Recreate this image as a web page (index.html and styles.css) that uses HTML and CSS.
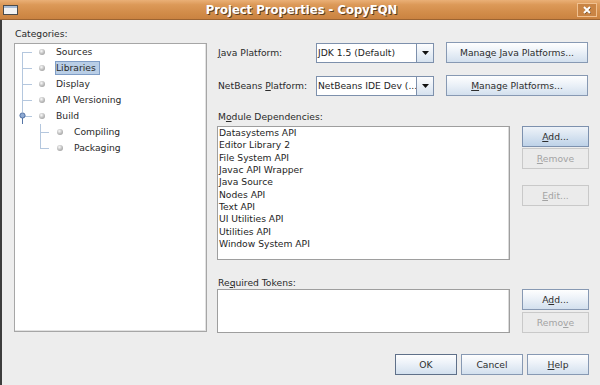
FILE: index.html
```html
<!DOCTYPE html>
<html>
<head>
<meta charset="utf-8">
<link rel="stylesheet" href="styles.css">
</head>
<body>
<div class="window">
  <div class="titlebar">
    <span class="win-icon">
      <svg width="15" height="10" viewBox="0 0 15 10"><rect x="0.5" y="0.5" width="14" height="9" fill="#f2f2f2" stroke="#4b4b4b"/><rect x="1" y="1" width="13" height="2" fill="#a9bdd6"/></svg>
    </span>
    <span class="title">Project Properties - CopyFQN</span>
    <span class="close">
      <svg width="20" height="14" viewBox="0 0 20 14"><rect x="0.5" y="0.5" width="19" height="13" fill="#c98444" stroke="#f0c08f"/><path d="M7.5 4.5 L13.5 10.5 M13.5 4.5 L7.5 10.5" stroke="#6b4520" stroke-width="2"/><path d="M7 4 L13 10 M13 4 L7 10" stroke="#fff" stroke-width="2"/></svg>
    </span>
  </div>
  <div class="content">
    <div class="main">
      <div class="left">
        <div class="cap">Categories:</div>
        <div class="tree">
          <div class="node top first"><span class="bullet"></span><span class="label">Sources</span></div>
          <div class="node top"><span class="bullet"></span><span class="label selected">Libraries</span></div>
          <div class="node top"><span class="bullet"></span><span class="label">Display</span></div>
          <div class="node top"><span class="bullet"></span><span class="label">API Versioning</span></div>
          <div class="node top build">
            <svg class="knob" width="7" height="12" viewBox="0 0 7 12"><line x1="3.5" y1="5" x2="3.5" y2="12" stroke="#5676a6" stroke-width="1"/><circle cx="3.5" cy="3.5" r="2.6" fill="#8eaad3" stroke="#4f70a3" stroke-width="1"/></svg>
            <span class="bullet"></span><span class="label">Build</span>
          </div>
          <div class="node sub"><span class="bullet"></span><span class="label">Compiling</span></div>
          <div class="node sub last"><span class="bullet"></span><span class="label">Packaging</span></div>
        </div>
      </div>
      <div class="right">
        <div class="form-row">
          <span class="field-label"><u>J</u>ava Platform:</span>
          <div class="combo"><span class="combo-text">JDK 1.5 (Default)</span><span class="combo-arrow"><svg width="7" height="4" viewBox="0 0 7 4"><path d="M0 0 H7 L3.5 4 Z" fill="#111"/></svg></span></div>
          <button class="btn wide">Mana<u>g</u>e Java Platforms...</button>
        </div>
        <div class="form-row second">
          <span class="field-label">NetBeans <u>P</u>latform:</span>
          <div class="combo"><span class="combo-text">NetBeans IDE Dev (...</span><span class="combo-arrow"><svg width="7" height="4" viewBox="0 0 7 4"><path d="M0 0 H7 L3.5 4 Z" fill="#111"/></svg></span></div>
          <button class="btn wide"><u>M</u>anage Platforms...</button>
        </div>
        <div class="cap dep-cap">M<u>o</u>dule Dependencies:</div>
        <div class="dep">
          <div class="list">
            <div class="item">Datasystems API</div>
            <div class="item">Editor Library 2</div>
            <div class="item">File System API</div>
            <div class="item">Javac API Wrapper</div>
            <div class="item">Java Source</div>
            <div class="item">Nodes API</div>
            <div class="item">Text API</div>
            <div class="item">UI Utilities API</div>
            <div class="item">Utilities API</div>
            <div class="item">Window System API</div>
          </div>
          <div class="side">
            <button class="btn hot"><u>A</u>dd...</button>
            <button class="btn" disabled><u>R</u>emove</button>
            <button class="btn spaced" disabled><u>E</u>dit...</button>
          </div>
        </div>
        <div class="cap tok-cap">Re<u>q</u>uired Tokens:</div>
        <div class="dep tokens">
          <div class="list"></div>
          <div class="side tight">
            <button class="btn">A<u>d</u>d...</button>
            <button class="btn" disabled>Remo<u>v</u>e</button>
          </div>
        </div>
      </div>
    </div>
    <div class="footer">
      <button class="btn default">OK</button>
      <button class="btn">Cancel</button>
      <button class="btn"><u>H</u>elp</button>
    </div>
  </div>
</div>
</body>
</html>
```
FILE: styles.css
```css
* { box-sizing: border-box; }
html, body { margin: 0; padding: 0; }
body {
  font-family: "DejaVu Sans", sans-serif;
  font-size: 9.2px;
  color: #2a2a2a;
  background: #ededed;
}
u { text-decoration: underline; text-underline-offset: 1px; }

.window {
  width: 600px;
  height: 385px;
  display: flex;
  flex-direction: column;
  background: #ededed;
  overflow: hidden;
}

.titlebar {
  height: 20px;
  flex: none;
  display: grid;
  grid-template-columns: 1fr auto 1fr;
  align-items: center;
  padding: 0 3px 0 3px;
  background: linear-gradient(to bottom, #eab077 0%, #dc9958 25%, #d18b48 70%, #ca8341 100%);
  border-bottom: 1px solid #9c6432;
}
.win-icon { display: flex; align-items: center; height: 10px; margin-top: 1px; }
.win-icon svg { display: block; }
.title {
  font-weight: bold;
  font-size: 11.6px;
  color: #fff;
  text-shadow: 1px 1px 0 #5c3d1f;
  padding-left: 3px;
}
.close { justify-self: end; display: flex; }
.close svg { display: block; }

.content {
  flex: 1;
  display: flex;
  flex-direction: column;
  border-left: 2px solid #3d3d3d;
  padding: 7px 11px 0 12px;
}

.main { display: flex; gap: 10px; }

.left { width: 193px; display: flex; flex-direction: column; }
.cap { line-height: 14px; height: 14px; }
.left .cap { padding-left: 1px; }

.tree {
  margin-top: 2px;
  height: 289px;
  background: #fff;
  border: 1px solid #a6a6a6;
  box-shadow: inset -1px -1px 0 #e2e2e2;
  padding-top: 0;
}
.node {
  position: relative;
  height: 16px;
  display: flex;
  align-items: center;
  padding-left: 24px;
}
.node.sub { padding-left: 42px; }
.node::before {
  content: "";
  position: absolute;
  left: 7px;
  top: 8px;
  width: 10px;
  border-top: 1px solid #b4c7de;
}
.node::after {
  content: "";
  position: absolute;
  left: 7px;
  top: 0;
  height: 16px;
  border-left: 1px solid #b4c7de;
}
.node.first::after { top: 8px; height: 8px; }
.node.build::after { height: 4px; }
.node.sub::before { left: 25px; width: 9px; }
.node.sub::after { left: 25px; }
.node.last::after { height: 9px; }
.knob { position: absolute; left: 4px; top: 4px; display: block; }

.bullet {
  width: 6px;
  height: 6px;
  border-radius: 50%;
  background: radial-gradient(circle at 40% 35%, #fafafa 0%, #c4c4c4 45%, #8c8c8c 100%);
  margin-right: 10px;
  flex: none;
}
.label {
  line-height: 12px;
  padding: 0 3px 0 0;
  border: 1px solid transparent;
  color: #2a2a2a;
  white-space: nowrap;
}
.label.selected {
  background: #b9cee6;
  border-color: #7f9dc6;
}

.right { width: 372px; padding-top: 15px; display: flex; flex-direction: column; }

.form-row { display: flex; align-items: center; height: 21px; }
.form-row.second { margin-top: 12px; }
.field-label { width: 99px; padding-left: 1px; white-space: nowrap; }
.combo {
  width: 118px;
  height: 20px;
  display: flex;
  border: 1px solid #7d90ac;
  background: #fff;
}
.combo-text {
  flex: 1;
  padding-left: 1px;
  line-height: 17px;
  white-space: nowrap;
  overflow: hidden;
  color: #1e1e1e;
}
.combo-arrow {
  width: 17px;
  border-left: 1px solid #7d90ac;
  background: linear-gradient(to bottom, #fdfdfe, #d6e2ef);
  display: flex;
  align-items: center;
  justify-content: center;
}
.combo-arrow svg { display: block; }

.btn {
  font-family: "DejaVu Sans", sans-serif;
  font-size: 9.2px;
  color: #2e2e2e;
  height: 21px;
  padding: 0;
  margin: 0;
  border: 1px solid #8799b3;
  border-radius: 0;
  background: linear-gradient(to bottom, #fefefe 0%, #eef3f9 40%, #d3e0ee 100%);
  text-align: center;
  white-space: nowrap;
}
.btn.wide { width: 142px; margin-left: 12px; }
.btn.hot {
  background: linear-gradient(to bottom, #eef3f9 0%, #dbe6f2 40%, #bed2e8 100%);
  border-color: #7d91ae;
}
.btn:disabled {
  color: #a3a3a3;
  border-color: #c9c9c9;
  background: #ebebeb;
}
.btn.default { border-color: #5f7089; }

.dep-cap { margin-top: 14px; padding-left: 1px; }
.dep { display: flex; gap: 12px; margin-top: 2px; }
.list {
  flex: 1;
  height: 134px;
  background: #fff;
  border: 1px solid #9e9e9e;
  box-shadow: inset -1px 0 0 #dadada;
  padding: 0 0 0 1px;
}
.item { line-height: 12.35px; height: 12.35px; white-space: nowrap; color: #1e1e1e; }
.side { width: 67px; display: flex; flex-direction: column; gap: 1px; }
.side .btn { width: 67px; }
.side .btn.spaced { margin-top: 15px; }

.tok-cap { margin-top: 16px; padding-left: 1px; height: 13px; line-height: 13px; }
.tokens { margin-top: 0; }
.tokens .list { height: 44px; }
.side.tight { gap: 2px; }

.footer {
  display: flex;
  justify-content: flex-end;
  gap: 4px;
  margin-top: 21px;
}
.footer .btn { width: 62px; }
```
